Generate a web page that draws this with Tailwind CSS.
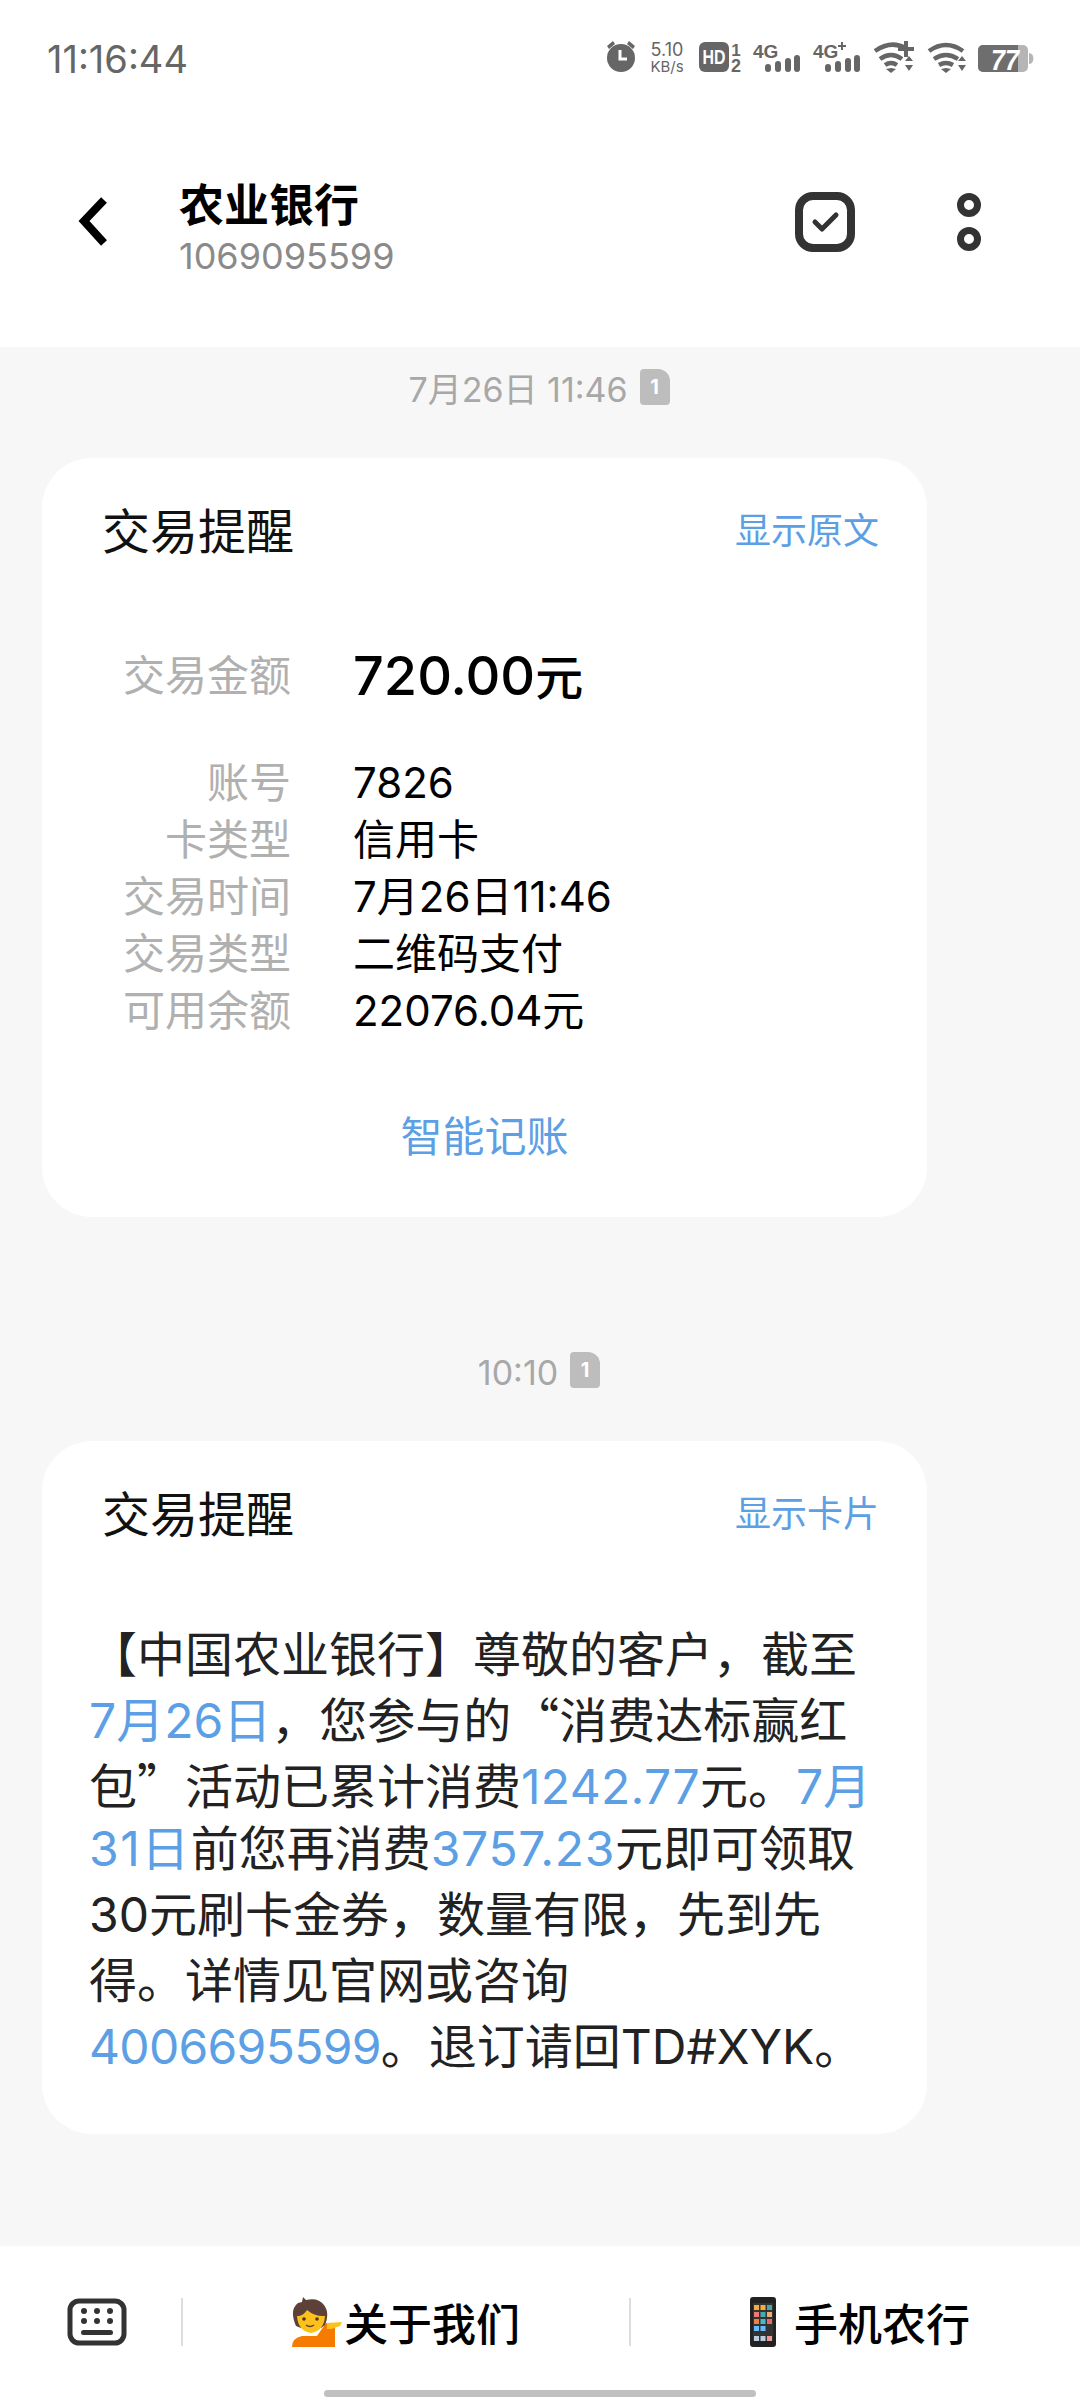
<!doctype html>
<html lang="zh-CN">
<head>
<meta charset="utf-8">
<script src="https://cdn.jsdelivr.net/npm/@tailwindcss/browser@4"></script>
</head>
<body class="m-0">
<div class="w-[1080px] h-[2400px] flex flex-col bg-[#f7f7f7] overflow-hidden font-['Noto_Sans_CJK_SC','Noto_Sans',sans-serif]">
  <div class="bg-white h-[347px] shrink-0 flex flex-col">
    <div class="h-[162px] flex items-start justify-between pl-[47px] pt-[34px]">
      <span class="text-[38px] leading-[50px] text-[#666] font-['Inter',sans-serif] font-normal">11:16:44</span>
      <svg class="mt-[-34px]" width="480" height="100" viewBox="600 0 480 100" fill="#666">
        <circle cx="621" cy="58" r="14"/><path d="M607 46l6-5 2 3-6 5zM635 46l-6-5-2 3 6 5z"/><path d="M620 50v9h7" fill="none" stroke="#fff" stroke-width="3"/>
        <text x="667" y="56" font-size="18" text-anchor="middle" font-family="Inter">5.10</text>
        <text x="667" y="72" font-size="15" text-anchor="middle" font-family="Inter">KB/s</text>
        <rect x="699" y="42" width="30" height="30" rx="6"/>
        <text x="714" y="64" font-size="20" font-weight="800" fill="#fff" text-anchor="middle" font-family="Liberation Sans" textLength="23" lengthAdjust="spacingAndGlyphs">HD</text>
        <text x="736" y="56" font-size="17" font-weight="700" text-anchor="middle" font-family="Liberation Sans">1</text>
        <text x="736" y="72" font-size="18" font-weight="700" text-anchor="middle" font-family="Liberation Sans">2</text>
        <text x="753" y="58" font-size="19" font-weight="800" font-family="Liberation Sans">4G</text>
        <g><rect x="765" y="64" width="6" height="8" rx="3"/><rect x="775" y="61" width="6" height="11" rx="3"/><rect x="785" y="58" width="6" height="14" rx="3"/><rect x="794" y="55" width="6" height="17" rx="3"/></g>
        <text x="813" y="58" font-size="19" font-weight="800" font-family="Liberation Sans">4G</text><path d="M841 42h2v3h3v2h-3v3h-2v-3h-3v-2h3z"/>
        <g><rect x="825" y="64" width="6" height="8" rx="3"/><rect x="835" y="61" width="6" height="11" rx="3"/><rect x="845" y="58" width="6" height="14" rx="3"/><rect x="854" y="55" width="6" height="17" rx="3"/></g>
        <g fill="none" stroke="#666" stroke-width="4.500"><path d="M875 51q16-11 30-3M880 59q11-8 22 0M885 65q6-4 12 0"/></g><path d="M886 69l5-1 5 1-5 4zM904 41h4v6h6v4h-6v6h-4v-6h-6v-4h6zM905 61l4-5 4 5zM905 65h8l-4 6z"/>
        <g fill="none" stroke="#666" stroke-width="4.500"><path d="M929 51q17-12 34 0M934 59q12-8 24 0M939 65q7-4 14 0"/></g><path d="M941 69l5-1 5 1-5 4zM958 61l4-5 4 5zM958 65h8l-4 6z"/>
        <rect x="978" y="45" width="50" height="27" rx="5" fill="#b5b5b5"/><path d="M983 45h35v27h-35a5 5 0 0 1-5-5v-17a5 5 0 0 1 5-5z" fill="#6e6e6e"/><path d="M1029 53a4 5 0 0 1 0 11z" fill="#b5b5b5"/>
        <text x="1005" y="70" font-size="30" font-weight="800" font-style="italic" fill="#fff" text-anchor="middle" font-family="Liberation Sans" textLength="28" lengthAdjust="spacingAndGlyphs">77</text>
      </svg>
    </div>
    <div class="flex items-center h-[120px]">
      <svg class="ml-[78px] w-[30px] h-[50px]" viewBox="0 0 30 50" fill="none" stroke="#000" stroke-width="8"><path d="M26 3 6 24l20 22"/></svg>
      <div class="ml-[71px] flex flex-col mt-[13px]">
        <span class="text-[45px] leading-[54px] font-bold text-black">农业银行</span>
        <span class="text-[36px] leading-[52px] text-[#8a8a8a] font-['Inter',sans-serif]">1069095599</span>
      </div>
      <svg class="ml-auto" width="60" height="60" viewBox="0 0 60 60" fill="none" stroke="#333" stroke-linecap="round" stroke-linejoin="round"><rect x="4" y="4" width="52" height="52" rx="14" stroke-width="8"/><path d="M20 30l7 7 14-14" stroke-width="5"/></svg>
      <svg class="ml-[102px] mr-[99px]" width="24" height="58" viewBox="0 0 24 58" fill="none" stroke="#333" stroke-width="7"><circle cx="12" cy="12" r="8.5"/><circle cx="12" cy="46" r="8.5"/></svg>
    </div>
  </div>

  <div class="flex-1 flex flex-col items-start relative">
    <div class="w-full h-[111px] flex items-start justify-center pt-[21px] pr-[2px] gap-[12px] text-[#a8a8a8] text-[34px] leading-[44px] font-['Inter','Noto_Sans_CJK_SC',sans-serif]">
      <span>7月26日 11:46</span><span class="w-[30px] h-[36px] mt-[1px] rounded-[4px] rounded-tr-[12px] bg-[#bdbdbd] text-white text-[20px] leading-[36px] text-center font-bold">1</span>
    </div>
    <div class="ml-[42px] w-[885px] h-[759px] rounded-[50px] bg-white flex flex-col">
      <div class="flex justify-between items-center pl-[60px] pr-[48px] pt-[43px]">
        <span class="text-[48px] leading-[54px] text-[#111]">交易提醒</span><span class="text-[36px] leading-[54px] text-[#5d9fe4]">显示原文</span>
      </div>
      <div class="grid grid-cols-[249px_1fr] gap-x-[62px] mt-[92px] items-center text-[42px] leading-[57px] text-black font-['Inter','Noto_Sans_CJK_SC',sans-serif]">
        <span class="text-right text-[#b0b0b0]">交易金额</span><span class="font-medium text-black h-[57px] leading-[57px] text-[54px] mt-[-3px]">720.00<span class="text-[48px] font-['Noto_Sans_CJK_SC',sans-serif]">元</span></span>
        <span class="col-span-2 h-[50px]"></span>
        <span class="text-right text-[#b0b0b0]">账号</span><span>7826</span>
        <span class="text-right text-[#b0b0b0]">卡类型</span><span>信用卡</span>
        <span class="text-right text-[#b0b0b0]">交易时间</span><span>7月26日11:46</span>
        <span class="text-right text-[#b0b0b0]">交易类型</span><span>二维码支付</span>
        <span class="text-right text-[#b0b0b0]">可用余额</span><span>22076.04元</span>
      </div>
      <div class="text-center text-[42px] leading-[56px] text-[#5d9fe4] mt-[67px] w-[885px]">智能记账</div>
    </div>
    <div class="w-full h-[224px] flex items-start justify-center pt-[134px] pr-[2px] gap-[12px] text-[#a8a8a8] text-[34px] leading-[44px] font-['Inter','Noto_Sans_CJK_SC',sans-serif]">
      <span>10:10</span><span class="w-[30px] h-[36px] mt-[1px] rounded-[4px] rounded-tr-[12px] bg-[#bdbdbd] text-white text-[20px] leading-[36px] text-center font-bold">1</span>
    </div>
    <div class="ml-[42px] w-[885px] h-[693px] rounded-[50px] bg-white flex flex-col">
      <div class="flex justify-between items-center pl-[60px] pr-[48px] pt-[43px]">
        <span class="text-[48px] leading-[54px] text-[#111]">交易提醒</span><span class="text-[36px] leading-[54px] text-[#5d9fe4]">显示卡片</span>
      </div>
      <div class="ml-[47px] mt-[80px] text-[48px] leading-[66px] text-[#222] whitespace-nowrap font-['Inter','Noto_Sans_CJK_SC',sans-serif]">
        <div class="h-[66px]"><span class="font-['Noto_Sans_CJK_SC',sans-serif]">【</span>中国农业银行<span class="font-['Noto_Sans_CJK_SC',sans-serif]">】</span>尊敬的客户，截至</div>
        <div class="h-[66px]"><span class="text-[#5d9fe4]">7月26日</span>，您参与的<span class="font-['Noto_Sans_CJK_SC',sans-serif]">“</span>消费达标赢红</div>
        <div class="h-[66px]">包<span class="font-['Noto_Sans_CJK_SC',sans-serif]">”</span>活动已累计消费<span class="text-[#5d9fe4] tracking-[0.3px]">1242.77</span>元。<span class="text-[#5d9fe4]">7月</span></div>
        <div class="h-[66px]"><span class="text-[#5d9fe4] tracking-[1.500px]">31日</span>前您再消费<span class="text-[#5d9fe4] tracking-[0.7px]">3757.23</span>元即可领取</div>
        <div class="h-[66px]">30元刷卡金券，数量有限，先到先</div>
        <div class="h-[66px]">得。详情见官网或咨询</div>
        <div class="h-[66px]"><span class="text-[#5d9fe4] tracking-[-0.7px]">4006695599</span>。退订请回TD#XYK。</div>
      </div>
    </div>
  </div>

  <div class="bg-white h-[154px] shrink-0 relative flex items-start pt-[52px]">
    <svg class="ml-[67px]" width="60" height="48" viewBox="0 0 60 48" fill="#333"><rect x="3" y="3" width="54" height="42" rx="9" fill="none" stroke="#333" stroke-width="5"/><circle cx="17" cy="13" r="3"/><circle cx="30" cy="13" r="3"/><circle cx="43" cy="13" r="3"/><circle cx="17" cy="23" r="3"/><circle cx="30" cy="23" r="3"/><circle cx="43" cy="23" r="3"/><rect x="14" y="32" width="32" height="5" rx="2.5"/></svg>
    <div class="ml-[54px] w-[2px] h-[48px] bg-[#ddd]"></div>
    <div class="ml-[107px] flex items-center h-[48px] gap-[2px]">
      <svg width="52" height="50" viewBox="0 0 52 50"><path d="M2 50q0-9 10-11h15l9-13 9 0v24z" fill="#f57c00"/><path d="M6 29Q-1 13 8 6l4-1 1-5 3 3q12-3 18 5 6 8 1 20l-4 3H11z" fill="#5d4037"/><path d="M7 19h2q5-1 8-6 7 6 16 6 1 0 2 0-1 15-14 17Q8 34 7 19z" fill="#fcc21b"/><circle cx="14" cy="22" r="1.800" fill="#4e342e"/><circle cx="27" cy="22" r="1.800" fill="#4e342e"/><path d="M16 28q4 3 8 0" fill="none" stroke="#5d4037" stroke-width="1.500"/><path d="M37 26l15-1-2 4-9 3-4 0z" fill="#fcc21b"/></svg>
      <span class="text-[44px] leading-[48px] font-medium text-black">关于我们</span>
    </div>
    <div class="ml-[109px] w-[2px] h-[48px] bg-[#ddd]"></div>
    <div class="ml-[119px] flex items-center h-[48px] gap-[18px]">
      <svg width="26" height="50" viewBox="0 0 26 50"><rect width="26" height="50" rx="3" fill="#222"/><rect x="3" y="6" width="20" height="38" fill="#333"/><g fill="#f0b040"><rect x="4" y="8" width="5" height="5"/><rect x="10.500" y="8" width="5" height="5"/></g><rect x="17" y="8" width="5" height="5" fill="#4aa"/><rect x="4" y="15" width="5" height="5" fill="#e77"/><rect x="10.500" y="15" width="5" height="5" fill="#4aa"/><rect x="17" y="15" width="5" height="5" fill="#ea7"/><rect x="4" y="22" width="5" height="5" fill="#f08040"/><rect x="10.500" y="22" width="5" height="5" fill="#4bc"/><rect x="17" y="22" width="5" height="5" fill="#e66"/><rect x="4" y="29" width="5" height="5" fill="#6bf"/><rect x="10.500" y="29" width="5" height="5" fill="#6bf"/><rect x="4" y="39" width="5" height="5" fill="#bcd"/><rect x="10.500" y="39" width="5" height="5" fill="#bcd"/><rect x="17" y="39" width="5" height="5" fill="#e99"/></svg>
      <span class="text-[44px] leading-[48px] font-medium text-black">手机农行</span>
    </div>
    <div class="absolute left-[324px] bottom-[3px] w-[432px] h-[7px] rounded-full bg-[#c0c0c0]"></div>
  </div>
</div>
</body>
</html>
